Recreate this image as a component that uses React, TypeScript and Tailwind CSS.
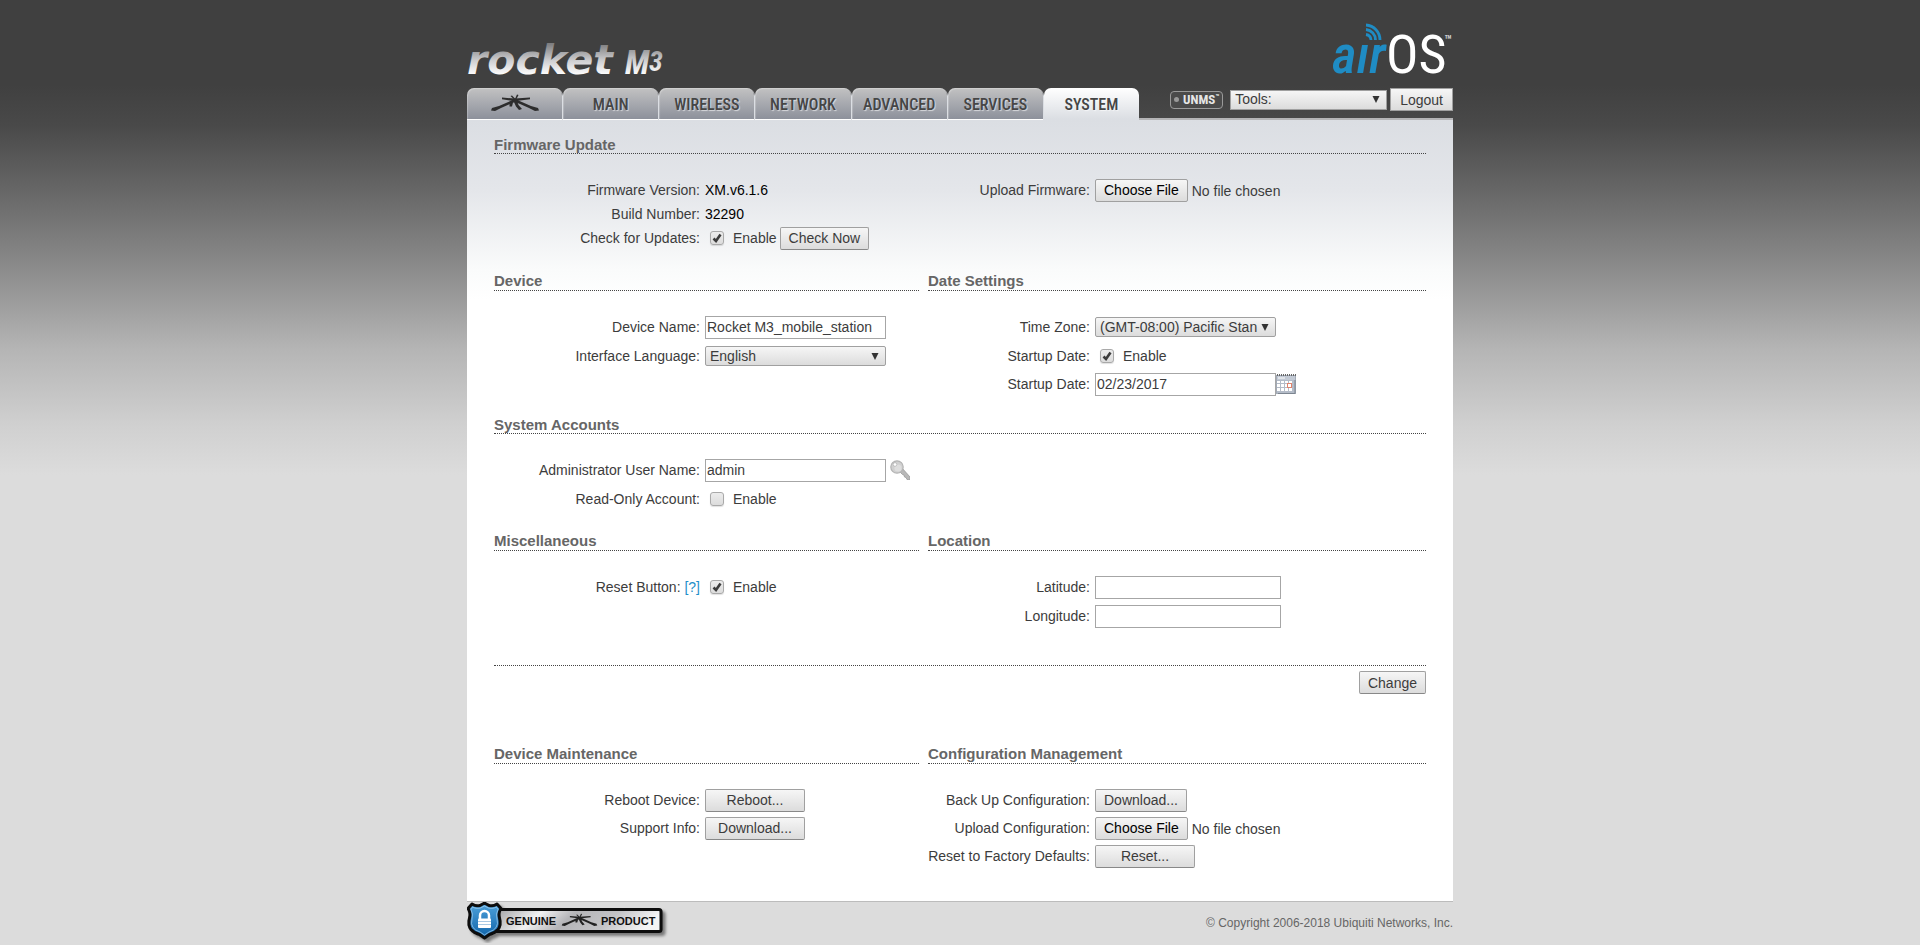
import type { ReactNode } from "react";

const buttonClass =
  "h-[23px] rounded-[2px] border border-[#a0a0a0] border-b-[#888] bg-linear-to-b from-[#f6f6f6] to-[#dcdcdc] px-2 text-sm leading-4 whitespace-nowrap";
const inputClass =
  "h-[23px] border border-[#a6a6a6] bg-white px-[1px] text-sm leading-4 outline-none";
const tabText =
  "flex h-8 flex-1 items-center justify-center rounded-t-[7px] border-b pt-[3px] font-['Roboto_Condensed','Liberation_Sans',sans-serif] text-base leading-5 font-medium text-[#454545] [text-shadow:1px_1px_1px_rgba(255,255,255,0.6)]";
const tabIdle =
  "border-white bg-linear-to-b from-[#c2c2c2] via-[#a7a9af] to-[#8d919b] shadow-[inset_1px_1px_1px_rgba(255,255,255,0.25),1px_1px_0_#dbdee3]";

function RifleShapes() {
  return (
    <>
      <path d="M1 16.500 L2 14 L9 12 L21 6.800 L25 4.600 L40 3.600 L40 5.300 L28 6.800 L20 10 L11 14 L5 17 Z" />
      <path d="M49 16.500 L48 14 L41 12 L29 6.800 L25 4.600 L12 3.600 L12 5.300 L22 6.800 L30 10 L39 14 L45 17 Z" />
      <path d="M23.500 7 L27 7 L28.500 11 L32 15 L29 16 L26 12.500 Z" />
      <path d="M19.500 9.500 L23 8.500 L22 12.500 L19.500 12.500 Z" />
      <path d="M27 0.500 L28.500 1 L26.500 5 L25 5 Z" />
      <path d="M20.500 2 L22 1.500 L25 4.500 L24 5.500 Z" />
    </>
  );
}

function RocketLogo() {
  return (
    <svg width="198" height="48" viewBox="0 0 198 48" className="overflow-visible" role="img" aria-label="rocket M3">
      <defs>
        <linearGradient id="chrome" gradientUnits="userSpaceOnUse" x1="0" y1="4" x2="0" y2="35">
          <stop offset="0" stopColor="#7e7e80" />
          <stop offset="0.55" stopColor="#d0d0d2" />
          <stop offset="1" stopColor="#ffffff" />
        </linearGradient>
      </defs>
      <g fill="url(#chrome)" fontStyle="italic" fontWeight="700">
        <text x="0" y="34" fontSize="41" fontFamily="DejaVu Sans, sans-serif">rocket</text>
        <text x="158" y="34" fontSize="33" fontFamily="Roboto Condensed, sans-serif">M</text>
        <text x="182" y="31" fontSize="28" fontFamily="Roboto Condensed, sans-serif">3</text>
      </g>
    </svg>
  );
}

function AirOsLogo() {
  return (
    <svg width="126" height="70" viewBox="0 0 126 70" className="overflow-visible" role="img" aria-label="airOS">
      <g fontFamily="Roboto Condensed, sans-serif">
        <text x="5" y="55" fontSize="53" fontStyle="italic" fontWeight="500" fill="#1f8cc4">aır</text>
        <text x="59" y="55" fontSize="54" fontWeight="400" fill="#ffffff">OS</text>
        <text x="117" y="27" fontSize="14" fontWeight="700" fill="#cfcfcf">™</text>
      </g>
      <g fill="none" stroke="#1f8cc4" strokeWidth="2.8">
        <path d="M39 16.500 A6 6 0 0 1 44 22" />
        <path d="M39 11.500 A10.500 10.500 0 0 1 48.500 22" />
        <path d="M39 7 A15 15 0 0 1 53 22" />
      </g>
    </svg>
  );
}

function GenuineBadge() {
  return (
    <svg width="206" height="41" viewBox="0 1 206 41" role="img" aria-label="Genuine product">
      <defs>
        <linearGradient id="plate" x1="0" y1="0" x2="1" y2="0.150">
          <stop offset="0" stopColor="#9c9c9e" />
          <stop offset="0.3" stopColor="#f1f1f2" />
          <stop offset="0.5" stopColor="#b4b4b7" />
          <stop offset="0.75" stopColor="#c3c3c6" />
          <stop offset="1" stopColor="#f4f4f5" />
        </linearGradient>
        <linearGradient id="shield" x1="0" y1="0" x2="0" y2="1">
          <stop offset="0" stopColor="#4fa3dc" />
          <stop offset="1" stopColor="#0f62a8" />
        </linearGradient>
        <filter id="soft" x="-10%" y="-20%" width="120%" height="150%">
          <feDropShadow dx="3" dy="3" stdDeviation="1.5" floodColor="#000" floodOpacity="0.45" />
        </filter>
      </defs>
      <g filter="url(#soft)">
        <rect x="26" y="8.500" width="168" height="22" rx="2" fill="url(#plate)" stroke="#0d0d0d" strokeWidth="3" />
        <path
          d="M17.500 2 L22 4.500 Q26.500 5.500 30 3 L34 7.500 Q31 12 32.500 17 Q34.500 24 31 28.500 Q28 32 22.500 33.500 L17.500 37 L12.500 33.500 Q7 32 4 28.500 Q0.500 24 2.500 17 Q4 12 1 7.500 L5 3 Q8.500 5.500 13 4.500 Z"
          fill="url(#shield)"
          stroke="#0d0d0d"
          strokeWidth="3"
          strokeLinejoin="round"
        />
      </g>
      <path
        d="M17.500 5 L22 7.200 Q26 8 29.500 6.200 L31 8.500 Q28.500 13 30 18 Q31.500 23 29 26.500 Q27 29.500 22 31 L17.500 34 L13 31 Q8 29.500 6 26.500 Q3.500 23 5 18 Q6.500 13 4 8.500 L5.500 6.200 Q9 8 13 7.200 Z"
        fill="none"
        stroke="#a8d0ee"
        strokeOpacity="0.7"
      />
      <path d="M13 18 V14.500 A4.500 4.500 0 0 1 22 14.500 V18" fill="none" stroke="#fff" strokeWidth="2.5" />
      <rect x="11" y="17.500" width="13" height="9.500" rx="1" fill="#fff" />
      <path d="M11 20.500 H24 M11 23.500 H24" stroke="#a9c9e4" />
      <g fontFamily="Liberation Sans, sans-serif" fontSize="11" fontWeight="700" fill="#111">
        <text x="39" y="24">GENUINE</text>
        <text x="134" y="24">PRODUCT</text>
      </g>
      <svg x="94" y="12" width="37" height="14" viewBox="0 0 50 18" fill="#222">
        <RifleShapes />
      </svg>
    </svg>
  );
}

function Heading({ children, tall = true }: { children: ReactNode; tall?: boolean }) {
  return (
    <h2
      className={
        "border-b border-dotted border-[#444] text-[15px] leading-[17px] font-bold text-[#666] " +
        (tall ? "pb-px" : "")
      }
    >
      {children}
    </h2>
  );
}

type RowProps = { label: ReactNode; htmlFor?: string; side: "left" | "right"; height?: string; children: ReactNode };

function Row({ label, htmlFor, side, height = "h-7", children }: RowProps) {
  return (
    <div className={"flex items-center gap-[5px] whitespace-nowrap " + height}>
      <label htmlFor={htmlFor} className={side === "left" ? "w-[206px] text-right" : "w-[162px] text-right"}>
        {label}
      </label>
      <div className="flex items-center">{children}</div>
    </div>
  );
}

function Check({ id, checked = false }: { id: string; checked?: boolean }) {
  return (
    <label className="flex items-center gap-[9px] pl-[5px]">
      <span className="grid">
        <input
          id={id}
          type="checkbox"
          defaultChecked={checked}
          className="peer size-[14px] appearance-none rounded-[3px] border border-[#a9a9a9] bg-linear-to-b from-[#ececec] to-[#dcdcdc] shadow-[0_1px_1px_rgba(0,0,0,0.12)] [grid-area:1/1]"
        />
        <svg viewBox="0 0 14 14" className="pointer-events-none invisible size-[14px] peer-checked:visible [grid-area:1/1]" aria-hidden="true">
          <path d="M3.500 7.500 L6 10 L10.500 3.500" fill="none" stroke="#3c3c3c" strokeWidth="2.6" />
        </svg>
      </span>
      Enable
    </label>
  );
}

function Dropdown({ id, value, className, label }: { id: string; value: string; className: string; label?: string }) {
  return (
    <span className="grid items-center">
      <select
        id={id}
        aria-label={label}
        className={
          "h-5 appearance-none border border-[#a0a0a0] bg-linear-to-b from-[#f6f6f6] to-[#dcdcdc] pr-4 pb-px pl-1 text-sm leading-4 [grid-area:1/1] " +
          className
        }
      >
        <option>{value}</option>
      </select>
      <svg viewBox="0 0 8 7" className="pointer-events-none mr-[7px] h-[7px] w-2 justify-self-end [grid-area:1/1]" aria-hidden="true">
        <path d="M0.500 0 H7.500 L4 7 Z" fill="#333" />
      </svg>
    </span>
  );
}

const fileClass =
  "w-[220px] text-sm leading-4 file:h-[23px] file:rounded-[2px] file:border file:border-solid file:border-[#a0a0a0] file:bg-linear-to-b file:from-[#f6f6f6] file:to-[#dcdcdc] file:px-2 file:text-sm file:leading-4 file:text-black";

const inputRow = "h-[29px] pb-px";
const columns = "grid grid-cols-[425fr_498fr] gap-x-[9px]";
const tabs = ["MAIN", "WIRELESS", "NETWORK", "ADVANCED", "SERVICES"];

export default function App() {
  return (
    <div className="min-h-screen bg-[#dcdcdc] bg-[linear-gradient(#404040_0px,#404040_85px,#494949_125px,#6b6b6b_200px,#8c8c8c_270px,#b5b5b5_350px,#d0d0d0_425px,#dcdcdc_475px)] font-['Liberation_Sans',Arial,sans-serif] text-sm leading-4 text-[#3c3c3c]">
      <div className="mx-auto w-full max-w-[986px]">
        <header>
          <div className="flex items-end justify-between pt-[18px]">
            <RocketLogo />
            <AirOsLogo />
          </div>
          <div className="flex">
            <nav className="flex w-[672px] gap-px">
              <a href="#ubnt" aria-label="Ubiquiti" className={tabText + " " + tabIdle}>
                <svg viewBox="0 0 50 18" className="mb-1 w-[50px]" fill="#2d2d2d" aria-hidden="true">
                  <RifleShapes />
                </svg>
              </a>
              {tabs.map((name) => (
                <a key={name} href={"#" + name.toLowerCase()} className={tabText + " " + tabIdle}>
                  {name}
                </a>
              ))}
              <a href="#system" className={tabText + " border-[#dbdee3] bg-linear-to-b from-white to-[#dbdee3]"}>
                SYSTEM
              </a>
            </nav>
            <div className="flex flex-1 justify-end border-b-2 border-[#b4b4b6] pb-[7px]">
              <div className="flex items-center">
                <button
                  type="button"
                  className="mr-[7px] flex h-[18px] w-[53px] items-center justify-center gap-1 rounded-[4px] border border-[#999] bg-[#4a4a4a] font-['Roboto_Condensed','Liberation_Sans',sans-serif] text-[13px] leading-4 font-bold text-[#e6e6e6]"
                >
                  <span className="size-[5px] rounded-full bg-[#999]" />
                  <span className="flex">
                    UNMS<span className="text-[7px] leading-[10px]">™</span>
                  </span>
                </button>
                <Dropdown id="tools" label="Tools" value="Tools:" className="w-[157px]" />
                <button type="button" className="ml-[3px] h-[23px] border border-[#a0a0a0] bg-linear-to-b from-[#f6f6f6] to-[#dcdcdc] px-[9px] text-sm leading-4">
                  Logout
                </button>
              </div>
            </div>
          </div>
        </header>

        <main className="border-b border-[#bcbcbc] bg-white bg-[linear-gradient(#dbdee3_0px,#e4e6ea_70px,#fafbfb_150px,#ffffff_180px)] px-[27px] pt-4 pb-[31px]">
          <Heading tall={false}>Firmware Update</Heading>
          <div className={columns + " pt-[22px] pb-5"}>
            <div>
              <Row side="left" label="Firmware Version:">
                <span className="text-black">XM.v6.1.6</span>
              </Row>
              <Row side="left" label="Build Number:" height="h-5">
                <span className="text-black">32290</span>
              </Row>
              <Row side="left" label="Check for Updates:" htmlFor="updates">
                <Check id="updates" checked />
                <button type="button" className={buttonClass + " ml-[3px]"}>
                  Check Now
                </button>
              </Row>
            </div>
            <Row side="right" label="Upload Firmware:" htmlFor="firmware">
              <input id="firmware" type="file" className={fileClass} />
            </Row>
          </div>

          <div className={columns + " pb-[17px]"}>
            <section>
              <Heading>Device</Heading>
              <div className="pt-[22px]">
                <Row side="left" label="Device Name:" htmlFor="name" height={inputRow}>
                  <input id="name" type="text" defaultValue="Rocket M3_mobile_station" className={inputClass + " w-[181px]"} />
                </Row>
                <Row side="left" label="Interface Language:" htmlFor="language">
                  <Dropdown id="language" value="English" className="w-[181px] rounded-[2px]" />
                </Row>
              </div>
            </section>
            <section>
              <Heading>Date Settings</Heading>
              <div className="pt-[22px]">
                <Row side="right" label="Time Zone:" htmlFor="zone" height={inputRow}>
                  <Dropdown id="zone" value="(GMT-08:00) Pacific Stan" className="w-[181px] rounded-[2px]" />
                </Row>
                <Row side="right" label="Startup Date:" htmlFor="startup">
                  <Check id="startup" checked />
                </Row>
                <Row side="right" label="Startup Date:" htmlFor="date" height={inputRow}>
                  <input id="date" type="text" defaultValue="02/23/2017" className={inputClass + " w-[181px]"} />
                  <button type="button" aria-label="Pick a date">
                    <svg width="20" height="20" viewBox="0 0 20 20" aria-hidden="true">
                      <rect x="0.500" y="1.500" width="19" height="18" fill="#b4bcc8" stroke="#a3abb7" />
                      <path d="M1 1 H20" stroke="#666" strokeWidth="2" strokeDasharray="1 1" />
                      <rect x="1" y="2" width="18" height="4" fill="#c3cad5" />
                      <path d="M2 4 H9" stroke="#fff" />
                      <g fill="#fff">
                        <path d="M1 7h3v2h-3z M5 7h3v2h-3z M9 7h3v2h-3z M13 7h3v2h-3z" />
                        <path d="M1 10h3v3h-3z M5 10h3v3h-3z M9 10h3v3h-3z M13 10h3v3h-3z" />
                        <path d="M1 14h3v3h-3z M5 14h3v3h-3z M9 14h3v3h-3z M13 14h3v3h-3z" />
                      </g>
                      <rect x="11.500" y="9.500" width="4" height="4" fill="#fff" stroke="#e0836c" />
                      <path d="M19 6 V19.500 H2" fill="none" stroke="#7c8590" />
                    </svg>
                  </button>
                </Row>
              </div>
            </section>
          </div>

          <section className="pb-[19px]">
            <Heading tall={false}>System Accounts</Heading>
            <div className="pt-[22px]">
              <Row side="left" label="Administrator User Name:" htmlFor="admin" height={inputRow}>
                <input id="admin" type="text" defaultValue="admin" className={inputClass + " w-[181px]"} />
                <button type="button" aria-label="Change password" className="ml-1">
                  <svg width="20" height="20" viewBox="0 0 20 20" aria-hidden="true">
                    <path d="M9 11 L12 8 L20 17 L19.500 20 L17 19.500 L16 17.500 L14.500 17 L14 15 L12.500 14.500 Z" fill="#b8b8b8" stroke="#999" strokeWidth="0.8" />
                    <circle cx="7" cy="7" r="6.200" fill="#d0d0d0" stroke="#b4b4b4" strokeWidth="1.2" />
                    <circle cx="8" cy="8" r="3.600" fill="#dedede" />
                    <circle cx="5" cy="4.500" r="1.800" fill="#fff" stroke="#aaa" strokeWidth="0.6" />
                  </svg>
                </button>
              </Row>
              <Row side="left" label="Read-Only Account:" htmlFor="readonly">
                <Check id="readonly" />
              </Row>
            </div>
          </section>

          <div className={columns + " border-b border-dotted border-[#444] pb-[34px]"}>
            <section>
              <Heading>Miscellaneous</Heading>
              <div className="pt-[22px]">
                <Row
                  side="left"
                  htmlFor="reset"
                  height={inputRow}
                  label={
                    <>
                      Reset Button: <a href="#help" className="text-[#1f8fc9]">[?]</a>
                    </>
                  }
                >
                  <Check id="reset" checked />
                </Row>
              </div>
            </section>
            <section>
              <Heading>Location</Heading>
              <div className="pt-[22px]">
                <Row side="right" label="Latitude:" htmlFor="latitude" height={inputRow}>
                  <input id="latitude" type="text" className={inputClass + " w-[186px]"} />
                </Row>
                <Row side="right" label="Longitude:" htmlFor="longitude" height={inputRow}>
                  <input id="longitude" type="text" className={inputClass + " w-[186px]"} />
                </Row>
              </div>
            </section>
          </div>
          <div className="flex justify-end pt-[5px] pb-[51px]">
            <button type="button" className={buttonClass}>
              Change
            </button>
          </div>

          <div className={columns}>
            <section>
              <Heading>Device Maintenance</Heading>
              <div className="pt-[22px]">
                <Row side="left" label="Reboot Device:">
                  <button type="button" className={buttonClass + " w-[100px]"}>
                    Reboot...
                  </button>
                </Row>
                <Row side="left" label="Support Info:">
                  <button type="button" className={buttonClass + " w-[100px]"}>
                    Download...
                  </button>
                </Row>
              </div>
            </section>
            <section>
              <Heading>Configuration Management</Heading>
              <div className="pt-[22px]">
                <Row side="right" label="Back Up Configuration:">
                  <button type="button" className={buttonClass}>
                    Download...
                  </button>
                </Row>
                <Row side="right" label="Upload Configuration:" htmlFor="config">
                  <input id="config" type="file" className={fileClass} />
                </Row>
                <Row side="right" label="Reset to Factory Defaults:">
                  <button type="button" className={buttonClass + " w-[100px]"}>
                    Reset...
                  </button>
                </Row>
              </div>
            </section>
          </div>
        </main>

        <footer className="flex items-center justify-between">
          <GenuineBadge />
          <p className="text-xs leading-4 text-[#666]">© Copyright 2006-2018 Ubiquiti Networks, Inc.</p>
        </footer>
      </div>
    </div>
  );
}
